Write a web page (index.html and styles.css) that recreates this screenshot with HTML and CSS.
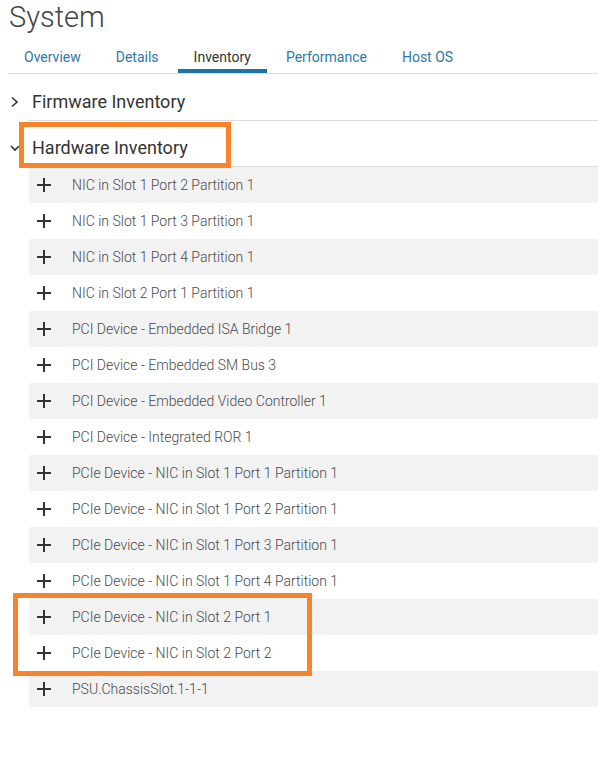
FILE: index.html
```html
<!DOCTYPE html>
<html lang="en">
<head>
  <meta charset="UTF-8" />
  <meta name="viewport" content="width=device-width, initial-scale=1.0"/>
  <title>System - Inventory</title>
  <link rel="stylesheet" href="styles.css">
</head>
<body>

  <div class="page">
    <h1 class="title">System</h1>

    <div class="tabs">
      <a class="tab">Overview</a>
      <a class="tab">Details</a>
      <a class="tab active">Inventory</a>
      <a class="tab">Performance</a>
      <a class="tab">Host OS</a>
    </div>

    <!-- collapsed group -->
    <div class="section">
      <div class="section-head">
        <svg class="chevron" width="20" height="24" viewBox="0 0 20 24">
          <path d="M4 7.5 L9 12 L4 16.5" fill="none" stroke="#333" stroke-width="1.6"/>
        </svg>
        <div class="section-title"><span>Firmware Inventory</span></div>
      </div>
    </div>

    <!-- expanded group -->
    <div class="section">
      <div class="section-head">
        <svg class="chevron" width="20" height="24" viewBox="0 0 20 24">
          <path d="M3 10 L7 14 L11 10" fill="none" stroke="#333" stroke-width="1.6"/>
        </svg>
        <div class="section-title"><span class="marked">Hardware Inventory</span></div>
      </div>

      <div class="rows">
        <div class="row shade"><span class="plus"></span>NIC in Slot 1 Port 2 Partition 1</div>
        <div class="row"><span class="plus"></span>NIC in Slot 1 Port 3 Partition 1</div>
        <div class="row shade"><span class="plus"></span>NIC in Slot 1 Port 4 Partition 1</div>
        <div class="row"><span class="plus"></span>NIC in Slot 2 Port 1 Partition 1</div>
        <div class="row shade"><span class="plus"></span>PCI Device - Embedded ISA Bridge 1</div>
        <div class="row"><span class="plus"></span>PCI Device - Embedded SM Bus 3</div>
        <div class="row shade"><span class="plus"></span>PCI Device - Embedded Video Controller 1</div>
        <div class="row"><span class="plus"></span>PCI Device - Integrated ROR 1</div>
        <div class="row shade"><span class="plus"></span>PCIe Device - NIC in Slot 1 Port 1 Partition 1</div>
        <div class="row"><span class="plus"></span>PCIe Device - NIC in Slot 1 Port 2 Partition 1</div>
        <div class="row shade"><span class="plus"></span>PCIe Device - NIC in Slot 1 Port 3 Partition 1</div>
        <div class="row"><span class="plus"></span>PCIe Device - NIC in Slot 1 Port 4 Partition 1</div>
        <div class="callout">
          <div class="row shade"><span class="plus"></span>PCIe Device - NIC in Slot 2 Port 1</div>
          <div class="row"><span class="plus"></span>PCIe Device - NIC in Slot 2 Port 2</div>
        </div>
        <div class="row shade"><span class="plus"></span>PSU.ChassisSlot.1-1-1</div>
      </div>
    </div>
  </div>

</body>
</html>
```

FILE: styles.css
```css
body {
  margin: 0;
  font-family: Roboto, 'Liberation Sans', sans-serif;
  background: #fff;
  color: #333;
}

.page {
  padding-left: 8px;
}

.title {
  margin: 0;
  padding: 0 0 2px 1px;
  font-size: 29px;
  font-weight: 300;
  line-height: 34px;
  color: #444;
}

/* tab strip */
.tabs {
  display: flex;
  gap: 3px;
  border-bottom: 1px solid #dcdcdc;
  margin-bottom: 1px;
}

.tab {
  padding: 11px 16px 2px;
  font-size: 14px;
  line-height: 20px;
  color: #2f78a6;
  border-bottom: 4px solid transparent;
  cursor: pointer;
}

.tab.active {
  color: #333;
  border-bottom-color: #1b75a6;
}

/* collapsible groups */
.section-head {
  display: flex;
}

.chevron {
  flex: none;
  margin-top: 15px;
}

.section-title {
  flex: 1;
  padding: 15px 0 6px 4px;
  font-size: 18px;
  line-height: 24px;
  color: #333;
  border-bottom: 1px solid #dcdcdc;
}

.marked {
  position: relative;
}

.marked::after,
.callout::after {
  content: '';
  position: absolute;
  border: 5px solid #f7832c;
  pointer-events: none;
}

.marked::after {
  top: -15px;
  left: -13px;
  right: -43px;
  bottom: -10px;
}

.rows {
  margin-left: 21px;
}

.row {
  display: flex;
  align-items: center;
  height: 36px;
  padding-left: 8px;
  font-size: 14px;
  font-weight: 300;
  color: #4a4a4a;
}

.row.shade {
  background: #f2f2f2;
}

/* plus sign drawn with two bars */
.plus {
  position: relative;
  width: 14px;
  height: 14px;
  margin-right: 21px;
  flex: none;
}

.plus::before,
.plus::after {
  content: '';
  position: absolute;
  background: #333;
}

.plus::before {
  left: 0;
  right: 0;
  top: 6px;
  height: 2px;
}

.plus::after {
  top: 0;
  bottom: 0;
  left: 6px;
  width: 2px;
}

.callout {
  position: relative;
}

.callout::after {
  top: -6px;
  bottom: -5px;
  left: -16px;
  right: 286px;
}
```
